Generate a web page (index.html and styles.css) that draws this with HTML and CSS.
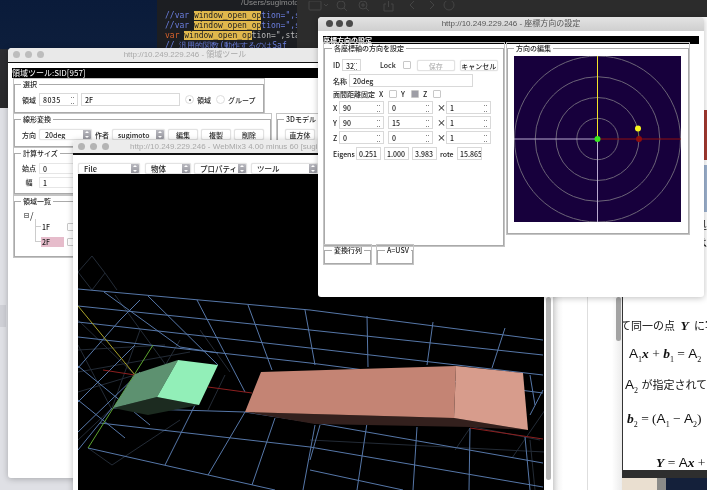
FILE: index.html
```html
<!DOCTYPE html>
<html lang="ja">
<head>
  <meta charset="UTF-8" />
  <title>WebMix3</title>
  <link rel="stylesheet" href="styles.css">
</head>
<body>
<div class="desktop">

  <div class="wall-dark"></div>
  <div class="wall-patch"></div>
  <div class="wall-tan"></div>

  <!-- エディタ -->
  <div class="editor">
    <div class="editor-code">
      <div class="editor-path">/Users/sugimoto -</div>
      <div class="code-line"><span class="c-blue">//var </span><span class="hl">window_open_op</span><span class="c-blue">tion=",sta</span></div>
      <div class="code-line"><span class="c-blue">//var </span><span class="hl">window_open_op</span><span class="c-blue">tion=",sta</span></div>
      <div class="code-line"><span class="c-red">var </span><span class="hl">window_open_op</span><span class="c-grey">tion=",statu</span></div>
      <div class="code-line"><span class="c-blue">//  汎用的関数(動作するのはSaf</span></div>
    </div>
    <div class="editor-tools">
      <svg width="200" height="12" viewBox="0 0 200 12" fill="none" stroke="#444">
        <rect x="4" y="0" width="12" height="9" rx="1"/>
        <path d="M19 3l2 2 2-2"/>
        <circle cx="36" cy="4" r="4"/><path d="M39 7l3 3"/>
        <circle cx="58" cy="4" r="4"/><path d="M61 7l3 3M56 4h4M58 2v4"/>
        <path d="M81 3h-2v7h9v-7h-2M83.500 6v-6"/>
        <path d="M109 0l-4 4 4 4"/>
        <path d="M125 0l4 4-4 4"/>
        <circle cx="144" cy="4" r="5"/>
      </svg>
    </div>
  </div>

  <!-- 資料ページ -->
  <div class="doc">
    <div class="doc-side">
      <div class="doc-side-a"></div>
      <div class="doc-side-b">
        <div class="doc-thumb"></div>
      </div>
    </div>
    <div class="doc-main">
      <div class="strip">
        <div class="strip-red"></div>
        <div class="strip-blue"></div>
        <div class="strip-text">処</div>
        <div class="strip-text">は</div>
      </div>
      <div class="math m1"><span class="ja">て同一の点</span> <b><i>Y</i></b> <span class="ja">に写</span></div>
      <div class="math m2"><span class="sans">A</span><sub>1</sub><b><i>x</i></b> + <b><i>b</i></b><sub>1</sub> = <span class="sans">A</span><sub>2</sub></div>
      <div class="math m3"><span class="sans">A</span><sub>2</sub> <span class="ja">が指定されて</span></div>
      <div class="math m4"><b><i>b</i></b><sub>2</sub> = (<span class="sans">A</span><sub>1</sub> − <span class="sans">A</span><sub>2</sub>)</div>
      <div class="math m5"><b><i>Y</i></b> = <span class="sans">A</span><b><i>x</i></b> +</div>
    </div>
  </div>

  <!-- 領域ツール -->
  <div class="win win-region">
    <div class="titlebar">
      <div class="lights"><i></i><i></i><i></i></div>
      <div class="title">http://10.249.229.246 - 領域ツール</div>
    </div>
    <div class="win-body">
      <div class="headbar">領域ツール:SID[957]</div>

      <fieldset class="group g-select">
        <legend>選択</legend>
        <div class="row">
          <span class="lbl">領域</span>
          <span class="field w39 wide">8035<em class="spin"></em></span>
          <span class="field w99">2F</span>
          <span class="radio on"></span><span class="lbl">領域</span>
          <span class="radio"></span><span class="lbl">グループ</span>
        </div>
      </fieldset>

      <div class="group-row">
        <fieldset class="group g-linear">
          <legend>線形変換</legend>
          <div class="row">
            <span class="lbl">方向</span>
            <span class="select w53">20deg<em class="arrows"></em></span>
            <span class="lbl">作者</span>
            <span class="select w53">sugimoto<em class="arrows"></em></span>
            <span class="btn w30">編集</span>
            <span class="btn w30">複製</span>
            <span class="btn w30">削除</span>
          </div>
        </fieldset>
        <fieldset class="group g-model">
          <legend>3Dモデル</legend>
          <div class="row">
            <span class="btn w30">直方体</span>
          </div>
        </fieldset>
      </div>

      <fieldset class="group g-size">
        <legend>計算サイズ</legend>
        <div class="row">
          <span class="lbl size-lbl">始点</span>
          <span class="field w50">0</span>
        </div>
        <div class="row">
          <span class="lbl size-lbl">幅</span>
          <span class="field w50">1</span>
        </div>
      </fieldset>

      <fieldset class="group g-list">
        <legend>領域一覧</legend>
        <div class="tree-root"><span class="tree-box"></span>/</div>
        <div class="tree-item"><span class="tree-name">1F</span><span class="check"></span></div>
        <div class="tree-item"><span class="tree-name sel">2F</span><span class="check"></span></div>
      </fieldset>
    </div>
  </div>

  <!-- WebMix -->
  <div class="win win-mix">
    <div class="titlebar">
      <div class="lights"><i></i><i></i><i></i></div>
      <div class="title">http://10.249.229.246 - WebMix3 4.00 minus 60 [sugimoto]</div>
    </div>
    <div class="win-rule"></div>
    <div class="mix-menu">
      <span class="select m-file">File<em class="arrows"></em></span>
      <span class="select m-obj">物体<em class="arrows"></em></span>
      <span class="select m-prop">プロパティ<em class="arrows"></em></span>
      <span class="select m-tool">ツール<em class="arrows"></em></span>
    </div>
    <div class="mix-main">
      <svg class="scene" width="466" height="316" viewBox="78 174 466 316" fill="none">
        <g stroke="#232b36">
          <path d="M92 256L78 272M92 256L105 273L117 290M78 272L92 290M105 273L92 290"/>
          <path d="M78 320L135 375M78 345L112 410M115 295L195 405M140 330L112 408L78 440"/>
          <path d="M78 350L165 345M78 372L190 352M78 392L135 375M88 448L112 465L180 420"/>
          <path d="M225 375L208 410M180 340L145 400M470 428L455 450M545 410L512 458M530 440L535 490"/>
          <path d="M310 395L540 440M310 440L545 452M200 330L230 372"/>
        </g>
        <g stroke="#5677a8">
          <path d="M78 289L310 310L543 340"/>
          <path d="M78 306L310 330L543 355"/>
          <path d="M78 322L310 348L543 375"/>
          <path d="M78 337L310 363L543 393"/>
          <path d="M113 408L245 412L310 422L543 463"/>
          <path d="M100 423L310 447L543 487"/>
          <path d="M88 448L275 490"/>
          <path d="M310 470L403 490"/>
          <path d="M104 292L180 347L218 353"/>
          <path d="M148 296L218 365"/>
          <path d="M197 300L245 392"/>
          <path d="M248 305L272 370"/>
          <path d="M305 310L315 365"/>
          <path d="M367 316L368 367"/>
          <path d="M433 322L427 365"/>
          <path d="M505 328L492 368"/>
          <path d="M530 375L535 405"/>
          <path d="M367 423L357 490"/>
          <path d="M417 427L413 490"/>
          <path d="M470 428L469 490"/>
          <path d="M525 437L530 490"/>
          <path d="M320 425L310 460"/>
          <path d="M195 405L165 465"/>
          <path d="M245 412L208 475"/>
          <path d="M275 418L252 485"/>
          <path d="M315 425L303 490"/>
          <path d="M78 368L120 320L140 300"/>
          <path d="M78 402L135 345"/>
          <path d="M78 432L140 372"/>
          <path d="M78 450L112 408"/>
          <path d="M78 366L150 425"/>
          <path d="M78 400L125 438"/>
          <path d="M530 415L543 390"/>
        </g>
        <path d="M78 306L135 375" stroke="#a9a22a"/>
        <path d="M88 448L153 345" stroke="#5da52f"/>
        <path d="M103 370L135 375M208 387L252 393M470 428L543 439" stroke="#8c1f1f"/>

        <polygon points="113,408 157,397 199,405 148,415" fill="#1c2b20"/>
        <polygon points="135,374 178,360 157,397 113,408" fill="#5d9170"/>
        <polygon points="178,360 218,365 199,405 157,397" fill="#92efb8"/>

        <polygon points="245,412 454,418 528,430 470,427 315,424" fill="#33201d"/>
        <polygon points="261,372 456,366 454,418 245,412" fill="#c48474"/>
        <polygon points="456,366 523,373 528,430 454,418" fill="#d79c8c"/>
      </svg>
      <div class="mix-scroll"></div>
    </div>
  </div>

  <!-- 座標方向の設定 -->
  <div class="win win-dir">
    <div class="titlebar">
      <div class="lights"><i></i><i></i><i></i></div>
      <div class="title">http://10.249.229.246 - 座標方向の設定</div>
    </div>
    <div class="win-body">
      <div class="headbar">座標方向の設定</div>
      <div class="dir-top">
        <fieldset class="group g-axes">
          <legend>各座標軸の方向を設定</legend>
          <div class="row r-id">
            <span class="lbl id-lbl">ID</span>
            <span class="field w19">32<em class="spin"></em></span>
            <span class="lbl lock">Lock</span>
            <span class="check"></span>
            <span class="btn off w38">保存</span>
            <span class="btn w38">キャンセル</span>
          </div>
          <div class="row r-name">
            <span class="lbl">名称</span>
            <span class="field w124">20deg</span>
          </div>
          <div class="row r-fix">
            <span class="lbl">面間距離固定</span>
            <span class="lbl axis">X</span><span class="check"></span>
            <span class="lbl axis">Y</span><span class="check on"></span>
            <span class="lbl axis">Z</span><span class="check"></span>
          </div>
          <div class="row r-vec r-x">
            <span class="lbl vec-lbl">X</span>
            <span class="field w45">90<em class="spin"></em></span>
            <span class="field w45">0<em class="spin"></em></span>
            <span class="lbl times">×</span>
            <span class="field w45">1<em class="spin"></em></span>
          </div>
          <div class="row r-vec">
            <span class="lbl vec-lbl">Y</span>
            <span class="field w45">90<em class="spin"></em></span>
            <span class="field w45">15<em class="spin"></em></span>
            <span class="lbl times">×</span>
            <span class="field w45">1<em class="spin"></em></span>
          </div>
          <div class="row r-vec">
            <span class="lbl vec-lbl">Z</span>
            <span class="field w45">0<em class="spin"></em></span>
            <span class="field w45">0<em class="spin"></em></span>
            <span class="lbl times">×</span>
            <span class="field w45">1<em class="spin"></em></span>
          </div>
          <div class="row r-eig">
            <span class="lbl eig-lbl">Eigens</span>
            <span class="field w25">0.251</span>
            <span class="field w25">1.000</span>
            <span class="field w25">3.983</span>
            <span class="lbl rote-lbl">rote</span>
            <span class="field w25">15.865</span>
          </div>
        </fieldset>

        <fieldset class="group g-edit">
          <legend>方向の編集</legend>
          <svg class="polar" width="167" height="166" viewBox="514 56 167 166" fill="none">
            <rect x="514" y="56" width="167" height="166" fill="#17003c"/>
            <g stroke="#6b6377">
              <circle cx="597.500" cy="139" r="83"/>
              <circle cx="597.500" cy="139" r="62.300"/>
              <circle cx="597.500" cy="139" r="41.500"/>
              <circle cx="597.500" cy="139" r="20.700"/>
            </g>
            <path d="M514 139H597.500V222" stroke="#b9a9cf"/>
            <path d="M597.500 139V56" stroke="#f2e428"/>
            <path d="M597.500 139H681" stroke="#8f0f0f"/>
            <path d="M639 139L638 128.500" stroke="#6d6a30"/>
            <circle cx="638" cy="128.500" r="3" fill="#f7f41e"/>
            <circle cx="639" cy="139" r="3" fill="#8f0d0d"/>
            <circle cx="597.500" cy="139" r="3" fill="#36e81e"/>
          </svg>
        </fieldset>
      </div>

      <div class="dir-bottom">
        <fieldset class="group g-mat"><legend>変換行列</legend></fieldset>
        <fieldset class="group g-usv"><legend>A=USV</legend></fieldset>
      </div>
    </div>
  </div>

</div>
</body>
</html>
```

FILE: styles.css
```css
html, body {
  margin: 0;
  padding: 0;
  height: 100%;
  overflow: hidden;
  background: #dfe0e5;
}

.desktop {
  position: relative;
  width: 707px;
  height: 490px;
  overflow: hidden;
  background: #dfe0e5;
  font-family: "Noto Sans CJK JP", "Liberation Sans", sans-serif;
  font-size: 7px;
  color: #222;
  filter: blur(0.35px);
}

/* 背景 */
.wall-dark {
  position: absolute;
  left: 0;
  top: 0;
  width: 157px;
  height: 108px;
  background: linear-gradient(to bottom, #0a1b3a 0%, #0d1e3c 45%, #2e2e32 46%, #2a2a2c 100%);
}

.wall-patch {
  position: absolute;
  left: 0;
  top: 305px;
  width: 6px;
  height: 22px;
  background: #cfd0d6;
}

.wall-tan {
  position: absolute;
  left: 622px;
  top: 478px;
  width: 85px;
  height: 12px;
  background: linear-gradient(to right, #eadfd0 0, #eadfd0 35px, #8b8b88 35px, #8b8b88 44px, #14203a 44px);
}

/* エディタ */
.editor {
  position: absolute;
  left: 157px;
  top: 0;
  width: 550px;
  height: 60px;
  display: flex;
  background: #2c2c2c;
}

.editor-code {
  width: 140px;
  padding-left: 8px;
  box-sizing: border-box;
  background: #1c1e22;
  font-family: "DejaVu Sans Mono", monospace;
  font-size: 8px;
  overflow: hidden;
  white-space: nowrap;
}

.editor-path {
  height: 11px;
  padding-left: 76px;
  font-family: "Liberation Sans", sans-serif;
  color: #8d8d8d;
  line-height: 5px;
}

.code-line {
  height: 10px;
  line-height: 10px;
}

.hl {
  background: #e0b84c;
  color: #222;
}

.c-blue { color: #6c7fe0; }
.c-red { color: #d8622c; }
.c-grey { color: #b9b9b9; }

.editor-tools {
  padding: 1px 0 0 8px;
}

/* 資料ページ */
.doc {
  position: absolute;
  left: 553px;
  top: 17px;
  width: 154px;
  height: 473px;
  display: flex;
}

.doc-side {
  width: 69px;
  display: flex;
  background: #fff;
}

.doc-side-a {
  width: 34px;
  border-right: 1px solid #dedede;
  background: linear-gradient(to right, #ececec, #fff 30%);
}

.doc-side-b {
  width: 34px;
  padding: 280px 0 0 28px;
  box-sizing: border-box;
  background: linear-gradient(to right, #fff 70%, #ececec);
}

.doc-thumb {
  width: 5px;
  height: 44px;
  border-radius: 3px;
  background: #a3a3a3;
}

.doc-main {
  width: 85px;
  height: 461px;
  box-sizing: border-box;
  border-left: 1px solid #333;
  border-bottom: 8px solid #2e2e2e;
  background: #fff;
  overflow: hidden;
  font-family: "Liberation Serif", "Noto Sans CJK JP", serif;
  font-size: 13.5px;
  color: #111;
}

.strip {
  width: 4px;
  height: 300px;
  margin-left: 80px;
  padding-top: 93px;
  box-sizing: border-box;
  overflow: hidden;
}

.strip-red {
  height: 50px;
  background: #a53a32;
}

.strip-blue {
  height: 47px;
  margin-top: 5px;
  background: #9db2cf;
}

.strip-text {
  margin-top: 8px;
  height: 10px;
  width: 4px;
  font-size: 11px;
  line-height: 10px;
  direction: rtl;
  overflow: hidden;
}

.math {
  white-space: nowrap;
  line-height: 16px;
  height: 16px;
}

.math sub {
  font-size: 8px;
  line-height: 0;
}

.ja {
  font-family: "Noto Sans CJK JP", sans-serif;
  font-size: 11px;
}

.sans {
  font-family: "Liberation Sans", sans-serif;
}

.m1 { margin-top: 0; margin-left: -3px; word-spacing: 2px; }
.m2 { margin-top: 13px; margin-left: 6px; }
.m3 { margin-top: 14px; margin-left: 2px; }
.m4 { margin-top: 19px; margin-left: 4px; }
.m5 { margin-top: 28px; margin-left: 33px; }

/* ウィンドウ共通 */
.win {
  position: absolute;
  display: flex;
  flex-direction: column;
  background: #fff;
  border-radius: 4px 4px 3px 3px;
  overflow: hidden;
  box-shadow: 0 1px 6px rgba(0, 0, 0, 0.25);
}

.titlebar {
  flex: none;
  position: relative;
  height: 14px;
  background: #e9e9e9;
}

.lights {
  position: absolute;
  left: 5px;
  top: 3px;
  display: flex;
  gap: 5px;
}

.lights i {
  display: block;
  width: 7px;
  height: 7px;
  border-radius: 50%;
  background: #bdbdbd;
}

.title {
  text-align: center;
  line-height: 14px;
  font-family: "Liberation Sans", "Noto Sans CJK JP", sans-serif;
  font-size: 8px;
  color: #a8a8a8;
  white-space: nowrap;
}

.win-body {
  flex: 1;
  min-height: 0;
  border-top: 1px solid #111;
}

.headbar {
  background: #000;
  color: #fff;
  font-size: 8px;
  line-height: 10px;
  height: 10px;
  white-space: nowrap;
}

fieldset.group {
  margin: 0;
  padding: 0 0 0 7px;
  min-width: 0;
  box-sizing: border-box;
  border: 1px solid #aaa;
  outline: 0.5px solid #c4c4c4;
}

.group legend {
  margin-left: -1px;
  padding: 0 2px;
  font-size: 7px;
  line-height: 10px;
  font-weight: 500;
  white-space: nowrap;
}

.g-edit legend, .g-mat legend, .g-usv legend {
  margin-left: 0;
}

.row {
  display: flex;
  align-items: center;
  white-space: nowrap;
}

.lbl {
  font-weight: 500;
}

.field, .select, .btn {
  box-sizing: border-box;
  position: relative;
  display: block;
  flex: none;
  height: 13px;
  line-height: 12px;
  background: #fff;
  font-size: 7px;
  font-weight: 500;
  white-space: nowrap;
  overflow: hidden;
}

.field {
  border: 1px solid #d9d9d9;
  padding-left: 3px;
}

.field.wide {
  letter-spacing: 0.4px;
}

.select {
  height: 11px;
  line-height: 10px;
  padding-left: 5px;
  border: 1px solid #e3e3e3;
  border-radius: 2px;
  box-shadow: 0 0 1px rgba(0, 0, 0, 0.2);
}

.btn {
  height: 11px;
  line-height: 10px;
  text-align: center;
  border: 1px solid #e2e2e2;
  border-radius: 2px;
  box-shadow: 0 0 1px rgba(0, 0, 0, 0.2);
}

.btn.off {
  color: #b5b5b5;
}

.spin {
  position: absolute;
  right: 3px;
  top: 3px;
  width: 3px;
  height: 5px;
  border-top: 1px dotted #888;
  border-bottom: 1px dotted #888;
}

.arrows {
  position: absolute;
  right: -1px;
  top: -1px;
  width: 9px;
  height: 11px;
  border-radius: 0 2px 2px 0;
  background: linear-gradient(to bottom, #bcbcc2, #94949c);
}

.arrows::before, .arrows::after {
  content: "";
  position: absolute;
  left: 2px;
  border-left: 2.500px solid transparent;
  border-right: 2.500px solid transparent;
}

.arrows::before {
  top: 2px;
  border-bottom: 2.500px solid #fff;
}

.arrows::after {
  bottom: 2px;
  border-top: 2.500px solid #fff;
}

.radio {
  flex: none;
  box-sizing: border-box;
  width: 9px;
  height: 9px;
  border: 1px solid #ddd;
  border-radius: 50%;
  background: #fff;
  position: relative;
}

.radio.on::after {
  content: "";
  position: absolute;
  left: 2.500px;
  top: 2.500px;
  width: 2px;
  height: 2px;
  border-radius: 50%;
  background: #555;
}

.check {
  display: block;
  flex: none;
  box-sizing: border-box;
  width: 8px;
  height: 8px;
  border: 1px solid #c8c8c8;
  border-radius: 1px;
  background: #fff;
}

.check.on {
  background: #9e9ea6;
}

.w19 { width: 19px; }
.w25 { width: 25px; }
.w30 { width: 30px; }
.w38 { width: 38px; }
.w39 { width: 39px; }
.w45 { width: 45px; }
.w50 { width: 50px; }
.w53 { width: 53px; }
.w99 { width: 99px; }
.w124 { width: 124px; }

/* 領域ツール */
.win-region {
  left: 8px;
  top: 48px;
  width: 354px;
  height: 430px;
}

.win-region .win-body {
  padding: 5px 0 0 4px;
}

.g-select {
  width: 250px;
  height: 34px;
  margin: 1px 0 0 2px !important;
}

.g-select .row {
  gap: 3px;
  padding-top: 4px;
}

.g-select .radio {
  margin-left: 2px;
}

.group-row {
  display: flex;
  gap: 6px;
  margin: 1px 0 0 2px;
}

.g-linear {
  flex: none;
  width: 257px;
  height: 33px;
}

.g-linear .row {
  gap: 3px;
  padding-top: 5px;
}

.g-model {
  flex: none;
  width: 60px;
  height: 33px;
}

.g-model .row {
  padding-top: 5px;
}

.g-size {
  width: 250px;
  height: 46px;
  margin: 1px 0 0 2px !important;
}

.g-size .row {
  gap: 3px;
  height: 14px;
}

.g-size .row:first-of-type {
  margin-top: 3px;
}

.g-size .field {
  height: 11px;
  line-height: 10px;
  border-color: #e6e6e6;
}

.size-lbl {
  width: 14px;
  text-align: center;
}

.g-list {
  width: 250px;
  height: 61px;
  margin: 2px 0 0 2px !important;
}

.tree-root {
  display: flex;
  align-items: center;
  gap: 1px;
  height: 12px;
  margin: 3px 0 -2px 2px;
  font-size: 9px;
}

.tree-box {
  width: 3px;
  height: 3px;
  border: 1px solid #888;
  background: linear-gradient(#888, #888) center / 100% 1px no-repeat;
}

.tree-item {
  display: flex;
  align-items: center;
  gap: 3px;
  height: 15px;
  margin-left: 13px;
  padding-left: 6px;
  font-weight: 500;
  background:
    linear-gradient(#ccc, #ccc) 0 0 / 1px 100% no-repeat,
    linear-gradient(#ccc, #ccc) 0 50% / 6px 1px no-repeat;
}

.tree-item:last-child {
  background-size: 1px 50%, 6px 1px;
}

.tree-name {
  display: block;
  width: 23px;
  height: 10px;
  line-height: 10px;
  font-size: 7px;
  padding-left: 1px;
  box-sizing: border-box;
}

.tree-name.sel {
  background: #e6bccb;
}

/* WebMix */
.win-mix {
  left: 73px;
  top: 140px;
  width: 480px;
  height: 360px;
}

.win-mix .titlebar {
  height: 13px;
  background: #ececec;
}

.win-mix .lights i {
  background: #b4b4b4;
}

.win-mix .title {
  padding-left: 57px;
  text-align: left;
  line-height: 13px;
}

.win-rule {
  flex: none;
  height: 2px;
  background: #111;
}

.mix-menu {
  flex: none;
  display: flex;
  height: 19px;
  padding: 8px 0 0 5px;
  box-sizing: border-box;
}

.mix-menu .select {
  font-size: 7.5px;
}

.m-file { width: 62px; }
.m-obj { width: 46px; margin-left: 5px; }
.m-prop { width: 53px; margin-left: 3px; }
.m-tool { width: 67px; margin-left: 4px; }

.mix-main {
  flex: 1;
  display: flex;
  padding-left: 5px;
}

.scene {
  flex: none;
  display: block;
  background: #000;
}

.mix-scroll {
  width: 5px;
  height: 183px;
  margin: 123px 0 0 2px;
  border-radius: 3px;
  background: #b4b4b4;
}

/* 座標方向の設定 */
.win-dir {
  left: 318px;
  top: 17px;
  width: 386px;
  height: 280px;
}

.win-dir .titlebar {
  background: linear-gradient(to bottom, #e3e3e3, #cfcfcf);
}

.win-dir .lights {
  left: 8px;
  gap: 3px;
}

.win-dir .lights i {
  background: #4a4a4a;
}

.win-dir .title {
  color: #555;
}

.win-dir .win-body {
  padding: 4px 0 0 5px;
  border-top-color: #fff;
}

.win-dir .headbar {
  width: 376px;
  height: 8px;
  line-height: 8px;
  font-size: 7px;
  font-weight: 700;
}

.dir-top {
  display: flex;
  align-items: flex-start;
  gap: 3px;
  margin: -1px 0 0 1px;
}

.g-axes {
  flex: none;
  width: 180px;
  height: 203px;
  padding-left: 8px !important;
}

.g-edit {
  flex: none;
  width: 182px;
  height: 191px;
  padding: 3px 0 0 6px !important;
}

.polar {
  display: block;
}

.r-id {
  gap: 2px;
  height: 12px;
  margin-top: 6px;
}

.r-id .field {
  height: 12px;
}

.id-lbl {
  width: 7px;
}

.r-id .lock {
  margin: 0 5px 0 17px;
}

.r-id .off {
  margin: 0 3px 0 4px;
}

.r-name {
  gap: 2px;
  margin-top: 3px;
}

.r-fix {
  height: 13px;
}

.r-fix .axis {
  width: 10px;
  margin-left: 4px;
}

.r-vec {
  height: 13px;
  margin-top: 2px;
}

.r-x {
  margin-top: 1px;
}

.r-vec .field {
  margin-right: 4px;
}

.vec-lbl {
  width: 6px;
}

.times {
  width: 9px;
  font-size: 9px;
  line-height: 9px;
}

.r-eig {
  gap: 3px;
  height: 13px;
  margin-top: 3px;
}

.r-eig .field {
  padding-left: 2px;
}

.eig-lbl {
  width: 20px;
}

.rote-lbl {
  width: 14px;
}

.dir-bottom {
  display: flex;
  gap: 6px;
  margin: -1px 0 0 1px;
}

.g-mat {
  width: 47px;
  height: 19px;
}

.g-usv {
  width: 36px;
  height: 19px;
}
```
